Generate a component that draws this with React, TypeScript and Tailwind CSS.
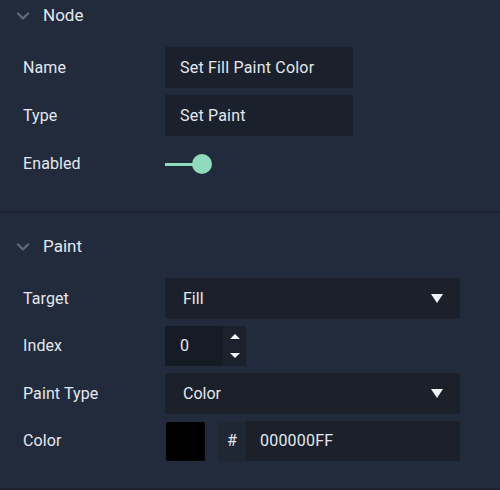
import { useState } from "react"

function Chevron() {
  return (
    <svg width="14" height="10" viewBox="0 0 14 10" className="ml-[16px] mr-[13px] opacity-70" style={{ filter: "blur(0.6px)" }}>
      <path d="M2 2.5 L7 7.5 L12 2.5" fill="none" stroke="#7a8290" strokeWidth="2.4" strokeLinecap="round" strokeLinejoin="round" />
    </svg>
  )
}

function Row({ label, height, children }: { label: string; height: string; children: React.ReactNode }) {
  return (
    <div className={`flex items-center ${height}`}>
      <div className="w-[165px] shrink-0 pl-[23px] text-[16px] tracking-[0.1px] text-[#e3e8ef]">{label}</div>
      {children}
    </div>
  )
}

function Triangle() {
  return (
    <svg width="12" height="9" viewBox="0 0 12 9">
      <path d="M0 0 L12 0 L6 9 Z" fill="#f2f4f7" />
    </svg>
  )
}

export default function App() {
  const [enabled] = useState<boolean>(true)

  return (
    <div className="w-[500px] h-[490px] bg-[#222b3b] flex flex-col overflow-hidden" style={{ fontFamily: "Roboto, 'Liberation Sans', sans-serif" }}>
      <div className="flex flex-col h-[211px]">
        <div className="flex items-center h-[30px] mt-[1px]">
          <Chevron />
          <span className="text-[17px] text-[#e3e8ef]">Node</span>
        </div>
        <div className="flex flex-col gap-[7px] mt-[16px]">
          <Row label="Name" height="h-[41px]">
            <div className="w-[188px] h-full bg-[#1b212c] flex items-center pl-[15px] text-[16px] tracking-[0.2px] text-[#e3e8ef]">Set Fill Paint Color</div>
          </Row>
          <Row label="Type" height="h-[41px]">
            <div className="w-[188px] h-full bg-[#1b212c] flex items-center pl-[15px] text-[16px] tracking-[0.2px] text-[#e3e8ef]">Set Paint</div>
          </Row>
          <Row label="Enabled" height="h-[42px]">
            <div className="flex items-center w-[48px]">
              <div className="w-[30px] h-[3px] bg-[#8edcbd]" />
              <div className={`w-[20px] h-[20px] rounded-full -ml-[3px] ${enabled ? "bg-[#8edcbd]" : "bg-gray-400"}`} />
            </div>
          </Row>
        </div>
      </div>
      <div className="h-[2px] bg-[#1b222e]" />
      <div className="flex flex-col h-[275px]">
        <div className="flex items-center h-[30px] mt-[19px]">
          <Chevron />
          <span className="text-[17px] text-[#e3e8ef]">Paint</span>
        </div>
        <div className="flex flex-col gap-[7px] mt-[16px]">
          <Row label="Target" height="h-[41px]">
            <div className="w-[295px] h-full bg-[#1b202a] rounded-[3px] flex items-center justify-between pl-[18px] pr-[17px] text-[16px] text-[#e3e8ef]">
              <span>Fill</span>
              <Triangle />
            </div>
          </Row>
          <Row label="Index" height="h-[40px]">
            <div className="flex h-full w-[81px]">
              <div className="w-[58px] h-full bg-[#161c26] flex items-center pl-[15px] text-[16px] text-[#e3e8ef]">0</div>
              <div className="w-[23px] h-full bg-[#1b222e] flex flex-col items-center justify-between py-[8px]">
                <svg width="10" height="5" viewBox="0 0 10 5"><path d="M0 5 L5 0 L10 5 Z" fill="#f2f4f7" /></svg>
                <svg width="10" height="5" viewBox="0 0 10 5"><path d="M0 0 L10 0 L5 5 Z" fill="#f2f4f7" /></svg>
              </div>
            </div>
          </Row>
          <Row label="Paint Type" height="h-[41px]">
            <div className="w-[295px] h-full bg-[#1b202a] rounded-[3px] flex items-center justify-between pl-[18px] pr-[17px] text-[16px] text-[#e3e8ef]">
              <span>Color</span>
              <Triangle />
            </div>
          </Row>
          <Row label="Color" height="h-[40px]">
            <div className="flex h-full items-center">
              <div className="w-[39px] h-[39px] ml-[1px] bg-black rounded-[2px]" />
              <div className="flex h-full ml-[13px] w-[242px]">
                <div className="w-[28px] h-full bg-[#1f2734] flex items-center justify-center text-[16px] text-[#e3e8ef]">#</div>
                <div className="flex-1 h-full bg-[#1b202a] flex items-center pl-[14px] text-[16px] tracking-[0.2px] text-[#e3e8ef]">000000FF</div>
              </div>
            </div>
          </Row>
        </div>
      </div>
      <div className="h-[2px] bg-[#1b222e]" />
    </div>
  )
}
